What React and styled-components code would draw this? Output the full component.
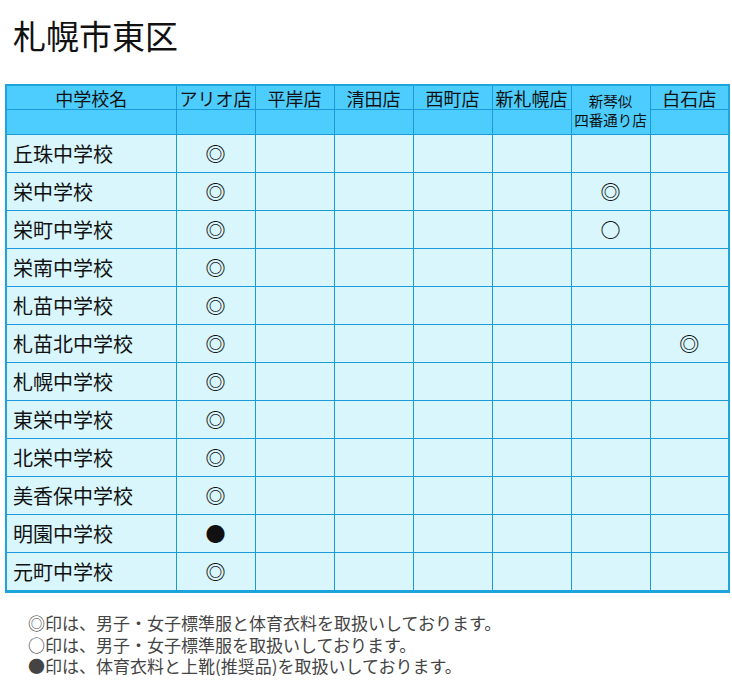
import React from "react";
import styled, { createGlobalStyle } from "styled-components";

const GlobalStyle = createGlobalStyle`
  html, body {
    margin: 0;
    padding: 0;
    background: #fff;
    font-family: "Noto Sans CJK JP", "Noto Sans", sans-serif;
  }
`;

const Page = styled.div`
  width: 732px;
  padding: 14px 0 0 5px;
  box-sizing: border-box;
`;

const Title = styled.h1`
  margin: 0 0 28px 8px;
  font-size: 33px;
  font-weight: 400;
  line-height: 42px;
  color: #111;
`;

const Table = styled.table`
  width: 724px;
  table-layout: fixed;
  border-collapse: collapse;
  border: 2px solid #1ea4dc;
  border-bottom-width: 3px;
`;

const Head = styled.th`
  background: #4dcdfd;
  border: 1px solid #1a9ad8;
  font-weight: 400;
  font-size: ${(p) => (p.$small ? "14.5px" : "18px")};
  line-height: ${(p) => (p.$small ? "19px" : "22px")};
  color: #111;
  padding: ${(p) => (p.$small ? "5px 0 0" : "0")};
  height: ${(p) => p.$h || "auto"};
  vertical-align: ${(p) => (p.$small ? "top" : "middle")};
  text-align: center;
  white-space: nowrap;
`;

const Cell = styled.td`
  background: #d8f6fc;
  border: 1px solid #1a9ad8;
  height: 37px;
  padding: 0 ${(p) => (p.$name ? "6px" : "0")};
  font-size: 20px;
  font-weight: ${(p) => (p.$name ? 400 : 700)};
  text-align: ${(p) => (p.$name ? "left" : "center")};
  color: #111;
  white-space: nowrap;
`;

const Notes = styled.div`
  margin: 19px 0 0 23px;
  font-size: 17px;
  line-height: 21.5px;
  color: #444;
`;

const shops = ["アリオ店", "平岸店", "清田店", "西町店", "新札幌店", null, "白石店"];

const rows = [
  ["丘珠中学校", { 0: "◎" }],
  ["栄中学校", { 0: "◎", 5: "◎" }],
  ["栄町中学校", { 0: "◎", 5: "○" }],
  ["栄南中学校", { 0: "◎" }],
  ["札苗中学校", { 0: "◎" }],
  ["札苗北中学校", { 0: "◎", 6: "◎" }],
  ["札幌中学校", { 0: "◎" }],
  ["東栄中学校", { 0: "◎" }],
  ["北栄中学校", { 0: "◎" }],
  ["美香保中学校", { 0: "◎" }],
  ["明園中学校", { 0: "●" }],
  ["元町中学校", { 0: "◎" }],
];

export default function App() {
  return (
    <Page>
      <GlobalStyle />
      <Title>札幌市東区</Title>
      <Table>
        <colgroup>
          <col style={{ width: 170 }} />
          {shops.map((_, i) => (
            <col key={i} style={{ width: 79 }} />
          ))}
        </colgroup>
        <thead>
          <tr>
            <Head $h="23px">中学校名</Head>
            {shops.map((s, i) =>
              s ? (
                <Head key={i} $h="23px">{s}</Head>
              ) : (
                <Head key={i} rowSpan={2} $small>
                  新琴似
                  <br />
                  四番通り店
                </Head>
              )
            )}
          </tr>
          <tr>
            <Head $h="24px" />
            {shops.map((s, i) => (s ? <Head key={i} $h="24px" /> : null))}
          </tr>
        </thead>
        <tbody>
          {rows.map(([name, marks]) => (
            <tr key={name}>
              <Cell $name>{name}</Cell>
              {shops.map((_, i) => (
                <Cell key={i}>{marks[i] || ""}</Cell>
              ))}
            </tr>
          ))}
        </tbody>
      </Table>
      <Notes>
        ◎印は、男子・女子標準服と体育衣料を取扱いしております。
        <br />
        ○印は、男子・女子標準服を取扱いしております。
        <br />
        ●印は、体育衣料と上靴(推奨品)を取扱いしております。
      </Notes>
    </Page>
  );
}
